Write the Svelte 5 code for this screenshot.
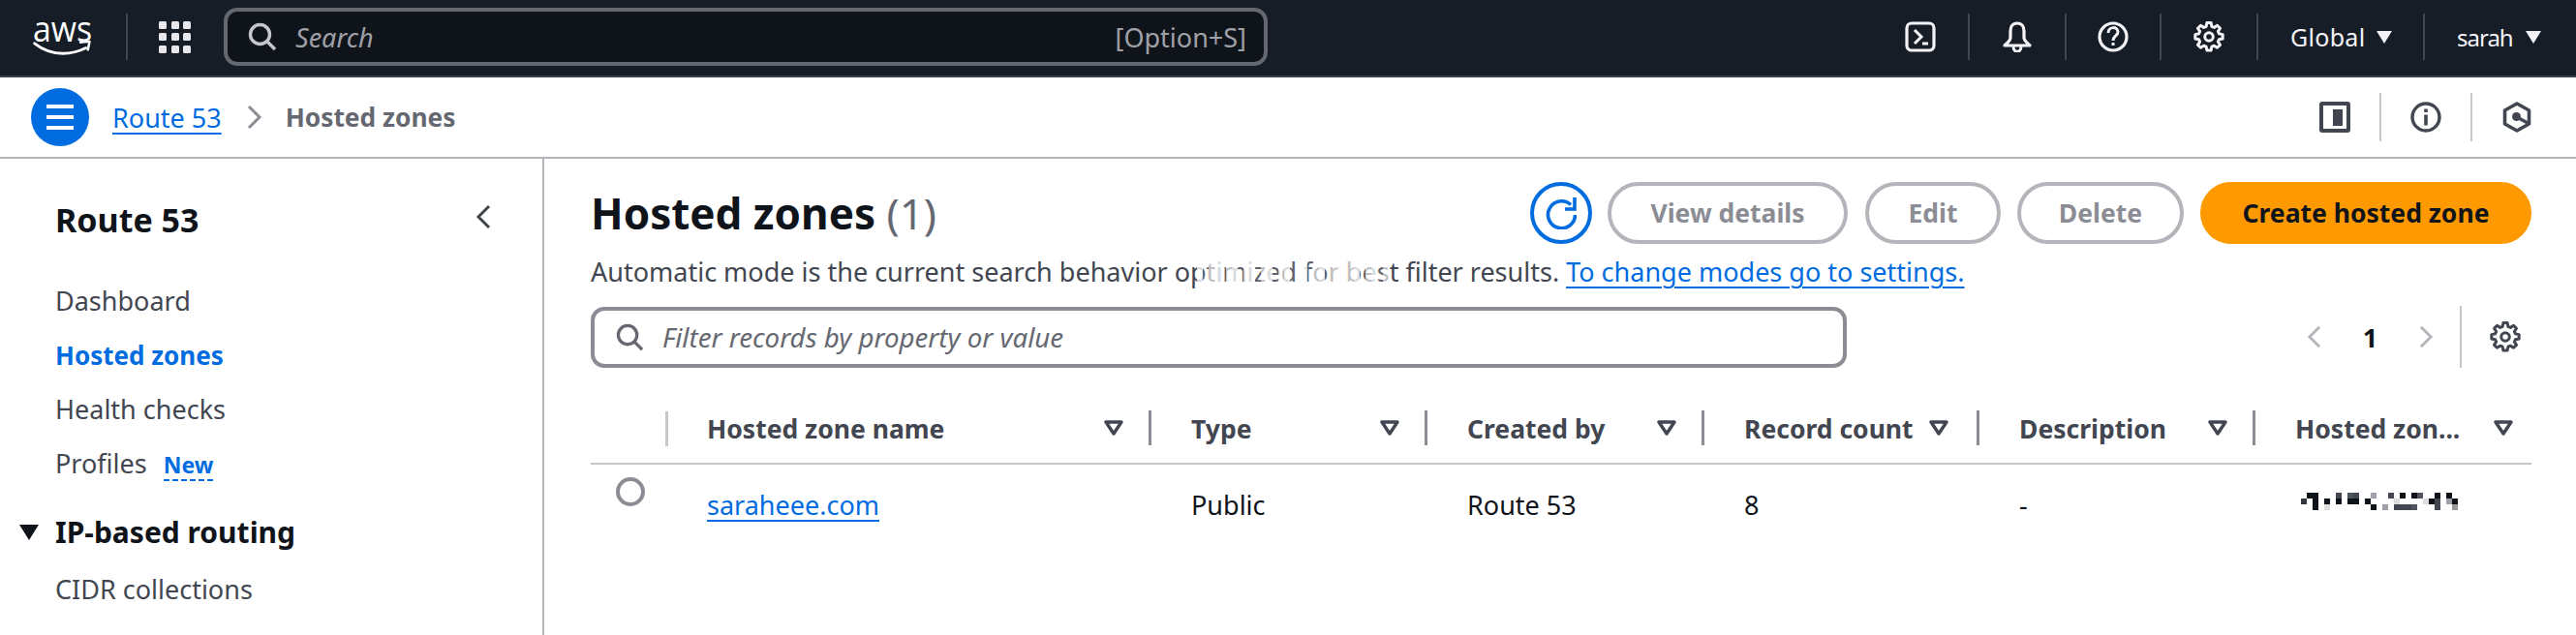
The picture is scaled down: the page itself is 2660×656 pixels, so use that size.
<script>
  const nav = [
    { label: 'Dashboard' },
    { label: 'Hosted zones', active: true },
    { label: 'Health checks' },
    { label: 'Profiles', badge: 'New' }
  ];
  const columns = [
    { label: 'Hosted zone name' },
    { label: 'Type' },
    { label: 'Created by' },
    { label: 'Record count' },
    { label: 'Description' },
    { label: 'Hosted zon...' }
  ];
  const gearPath = 'M13 1.500h4l.7 3.500 2.300 1 3-2 2.800 2.800-2 3 1 2.300 3.500.7v4l-3.500.7-1 2.300 2 3-2.800 2.800-3-2-2.300 1-.7 3.500h-4l-.7-3.500-2.300-1-3 2-2.800-2.800 2-3-1-2.300-3.500-.7v-4l3.500-.7 1-2.300-2-3L7 4l3 2 2.300-1z';
  // blurred id in the last column: [column, row, colour]
  const pixels = [
    [1, 0, '#0f141a'], [2, 0, '#0f141a'], [6, 0, '#424650'], [8, 0, '#50545c'], [9, 0, '#424650'], [12, 0, '#a0a0a8'], [15, 0, '#424650'], [17, 0, '#0f141a'], [19, 0, '#0f141a'], [20, 0, '#50545c'], [23, 0, '#0f141a'], [25, 0, '#0f141a'],
    [0, 1, '#333840'], [2, 1, '#0f141a'], [4, 1, '#0f141a'], [6, 1, '#0f141a'], [8, 1, '#0f141a'], [9, 1, '#0f141a'], [11, 1, '#0f141a'], [16, 1, '#dddde0'], [21, 1, '#dddde0'], [22, 1, '#0f141a'], [23, 1, '#424650'], [25, 1, '#a0a0a8'], [26, 1, '#0f141a'],
    [2, 2, '#0f141a'], [4, 2, '#dddde0'], [12, 2, '#0f141a'], [14, 2, '#a0a0a8'], [16, 2, '#424650'], [17, 2, '#424650'], [18, 2, '#424650'], [19, 2, '#50545c'], [23, 2, '#424650'], [26, 2, '#999']
  ];
</script>

<div class="page">
  <header class="topbar">
    <div class="logo">
      <span class="logo-text">aws</span>
      <svg viewBox="0 0 64 19" aria-hidden="true">
        <path d="M1 4c9 7 20 11 31 11 9 0 17-2 25-6" fill="none" stroke="#fff" stroke-width="3" stroke-linecap="round"/>
        <path d="M50 3l11-1-2 10" fill="none" stroke="#fff" stroke-width="2.600" stroke-linejoin="round"/>
      </svg>
    </div>
    <span class="bar-sep logo-sep"></span>
    <div class="apps">
      {#each Array(9) as _}<i></i>{/each}
    </div>
    <div class="search">
      <svg class="ic-search" viewBox="0 0 30 30" aria-hidden="true"><circle cx="12.500" cy="12.500" r="10" fill="none" stroke="currentColor" stroke-width="3.400"/><path d="M20 20l8 8" stroke="currentColor" stroke-width="3.400"/></svg>
      <span class="search-ph">Search</span>
      <span class="search-key">[Option+S]</span>
    </div>
    <div class="top-right">
      <span class="top-ic" style="--w:98px">
        <svg viewBox="0 0 32 32" aria-hidden="true"><rect x="2" y="2" width="28" height="28" rx="5" fill="none" stroke="currentColor" stroke-width="3.200"/><path d="M10 9l7 7-7 7" fill="none" stroke="currentColor" stroke-width="3"/><path d="M18 23h6" stroke="currentColor" stroke-width="3"/></svg>
      </span>
      <span class="bar-sep"></span>
      <span class="top-ic" style="--w:98px">
        <svg viewBox="0 0 32 32" aria-hidden="true"><path d="M16 2c-5 0-7 4-7 8v7c0 3-3 5-6 8h26c-3-3-6-5-6-8v-7c0-4-2-8-7-8z" fill="none" stroke="currentColor" stroke-width="3.200" stroke-linejoin="round"/><path d="M12 26c0 7 8 7 8 0" fill="none" stroke="currentColor" stroke-width="3"/></svg>
      </span>
      <span class="bar-sep"></span>
      <span class="top-ic" style="--w:96px">
        <svg viewBox="0 0 32 32" aria-hidden="true"><circle cx="16" cy="16" r="14" fill="none" stroke="currentColor" stroke-width="3.200"/><path d="M11 12c0-7 10-7 10-1 0 4-5 4-5 9" fill="none" stroke="currentColor" stroke-width="3"/><path d="M16 22v3" stroke="currentColor" stroke-width="3"/></svg>
      </span>
      <span class="bar-sep"></span>
      <span class="top-ic" style="--w:98px">
        <svg viewBox="0 0 30 30" aria-hidden="true"><path d={gearPath} fill="none" stroke="currentColor" stroke-width="2.800" stroke-linejoin="round"/><circle cx="15" cy="15" r="4" fill="none" stroke="currentColor" stroke-width="2.800"/></svg>
      </span>
      <span class="bar-sep"></span>
      <span class="menu region">Global <i class="caret"></i></span>
      <span class="bar-sep"></span>
      <span class="menu user">sarah <i class="caret"></i></span>
    </div>
  </header>

  <div class="crumbbar">
    <span class="burger"><i></i><i></i><i></i></span>
    <a class="link crumb" href="#top">Route 53</a>
    <svg class="crumb-chev" viewBox="0 0 16 26" aria-hidden="true"><path d="M2 2l11 11L2 24" fill="none" stroke="currentColor" stroke-width="3"/></svg>
    <span class="crumb-current">Hosted zones</span>
    <div class="tools">
      <svg viewBox="0 0 32 32" aria-hidden="true"><rect x="2" y="2" width="28" height="28" rx="1" fill="none" stroke="currentColor" stroke-width="4"/><rect x="14" y="8" width="10" height="17" fill="currentColor"/></svg>
      <span class="tool-sep"></span>
      <svg viewBox="0 0 32 32" aria-hidden="true"><circle cx="16" cy="16" r="14" fill="none" stroke="currentColor" stroke-width="3.400"/><path d="M16 13.500v11M16 7.500v3.500" stroke="currentColor" stroke-width="3.600"/></svg>
      <span class="tool-sep"></span>
      <svg viewBox="0 0 30 32" aria-hidden="true"><path d="M15 2l12.500 7v14L15 30 2.500 23V9z" fill="none" stroke="currentColor" stroke-width="3.600" stroke-linejoin="round"/><circle cx="14.500" cy="15.500" r="4.500" fill="currentColor"/><path d="M15 16l11 6" stroke="currentColor" stroke-width="3.400"/></svg>
    </div>
  </div>

  <div class="body">
    <aside class="side">
      <div class="side-head">
        <h2>Route 53</h2>
        <svg viewBox="0 0 16 26" aria-hidden="true"><path d="M14 2L3 13l11 11" fill="none" stroke="currentColor" stroke-width="3"/></svg>
      </div>
      <ul>
        {#each nav as item}
          <li class:active={item.active}>
            {item.label}
            {#if item.badge}<span class="badge">{item.badge}</span>{/if}
          </li>
        {/each}
      </ul>
      <div class="group"><i class="group-caret"></i>IP-based routing</div>
      <div class="group-item">CIDR collections</div>
    </aside>

    <main class="main">
      <div class="title-row">
        <h1>Hosted zones <span>(1)</span></h1>
        <div class="actions">
          <button class="refresh" aria-label="Refresh">
            <svg viewBox="0 0 32 34" aria-hidden="true"><path d="M26 8.500A14 14 0 1 0 30.500 19" fill="none" stroke="currentColor" stroke-width="3.600"/><path d="M30 1v12H20" fill="none" stroke="currentColor" stroke-width="3.600"/></svg>
          </button>
          <button class="btn view">View details</button>
          <button class="btn edit">Edit</button>
          <button class="btn del">Delete</button>
          <button class="btn primary">Create hosted zone</button>
        </div>
      </div>
      <p class="note">Automatic mode is the current search behavior <span class="blurred">optimized for best<i></i></span> filter results. <a class="link" href="#top">To change modes go to settings.</a></p>
      <div class="filter-row">
        <div class="filter">
          <svg viewBox="0 0 30 30" aria-hidden="true"><circle cx="12.500" cy="12.500" r="10" fill="none" stroke="currentColor" stroke-width="3.400"/><path d="M20 20l8 8" stroke="currentColor" stroke-width="3.400"/></svg>
          <span>Filter records by property or value</span>
        </div>
        <div class="pager">
          <svg class="pg-l" viewBox="0 0 16 26" aria-hidden="true"><path d="M14 2L3 13l11 11" fill="none" stroke="currentColor" stroke-width="3"/></svg>
          <b>1</b>
          <svg class="pg-r" viewBox="0 0 16 26" aria-hidden="true"><path d="M2 2l11 11L2 24" fill="none" stroke="currentColor" stroke-width="3"/></svg>
          <span class="pg-sep"></span>
          <svg class="pg-gear" viewBox="0 0 30 30" aria-hidden="true"><path d={gearPath} fill="none" stroke="currentColor" stroke-width="2.800" stroke-linejoin="round"/><circle cx="15" cy="15" r="4" fill="none" stroke="currentColor" stroke-width="2.800"/></svg>
        </div>
      </div>

      <div class="table">
        <div class="thead">
          <div class="cell-radio"><span class="th-sep"></span></div>
          {#each columns as col, i}
            <div class="th">
              <span>{col.label}</span>
              <svg viewBox="0 0 20 16" aria-hidden="true"><path d="M2 2h16l-8 12z" fill="none" stroke="currentColor" stroke-width="3.400" stroke-linejoin="round"/></svg>
              {#if i < columns.length - 1}<span class="th-sep dark"></span>{/if}
            </div>
          {/each}
        </div>
        <div class="tbody">
          <div class="cell-radio"><span class="radio"></span></div>
          <div class="td"><a class="link" href="#top">saraheee.com</a></div>
          <div class="td">Public</div>
          <div class="td">Route 53</div>
          <div class="td">8</div>
          <div class="td">-</div>
          <div class="td">
            <span class="pixelated">
              {#each pixels as p}
                <i style="left:{p[0] * 6}px;top:{p[1] * 6}px;background:{p[2]}"></i>
              {/each}
            </span>
          </div>
        </div>
      </div>
    </main>
  </div>
</div>

<style>
  :global(body) {
    margin: 0;
    background: #fff;
  }

  .page {
    width: 2660px;
    height: 656px;
    overflow: hidden;
    font-family: 'Noto Sans', sans-serif;
    font-size: 27px;
    color: #424650;
  }

  .link {
    color: #006ce0;
    text-decoration: underline;
    text-decoration-thickness: 2px;
    text-underline-offset: 5px;
  }

  /* top navigation */
  .topbar {
    height: 76px;
    padding-bottom: 2px;
    border-bottom: 2px solid #3a414c;
    background: #161d26;
    color: #f3f3f7;
    display: flex;
    align-items: center;
    padding-left: 33px;
    padding-right: 34px;
  }

  .logo {
    width: 64px;
    height: 42px;
    flex: none;
    display: flex;
    flex-direction: column;
    align-items: center;
  }

  .logo-text {
    font-family: 'Open Sans', sans-serif;
    font-size: 36px;
    line-height: 26px;
    color: #fff;
    transform: scaleX(0.94);
  }

  .logo svg {
    width: 64px;
    height: 19px;
    margin-top: -2px;
  }

  .bar-sep {
    width: 2px;
    height: 48px;
    background: #424650;
    flex: none;
  }

  .logo-sep {
    margin-left: 33px;
  }

  .apps {
    margin-left: 32px;
    width: 33px;
    display: grid;
    grid-template-columns: repeat(3, 8px);
    gap: 4.500px;
    flex: none;
  }

  .apps i {
    height: 8px;
    background: #e8e8ec;
    border-radius: 1.500px;
  }

  .search {
    margin-left: 34px;
    width: 1078px;
    height: 60px;
    box-sizing: border-box;
    border: 4px solid #656871;
    border-radius: 14px;
    background: #0f141a;
    display: flex;
    align-items: center;
    color: #b4b4bb;
    padding: 0 18px 0 21px;
    flex: none;
  }

  .ic-search {
    width: 30px;
    height: 30px;
    color: #c6c6cd;
  }

  .search-ph {
    font-style: italic;
    margin-left: 19px;
    color: #a0a0a8;
  }

  .search-key {
    margin-left: auto;
    color: #a0a0a8;
  }

  .top-right {
    margin-left: auto;
    display: flex;
    align-items: center;
  }

  .top-ic {
    width: var(--w);
    display: flex;
    justify-content: center;
  }

  .top-ic svg {
    width: 32px;
    height: 32px;
  }

  .menu {
    display: flex;
    align-items: center;
    font-size: 25px;
    color: #f3f3f7;
  }

  .region {
    width: 170px;
    padding-left: 33px;
    box-sizing: border-box;
    gap: 12px;
    letter-spacing: 0.3px;
  }

  .user {
    width: 122px;
    padding-left: 33px;
    box-sizing: border-box;
    gap: 13px;
    font-size: 24px;
    letter-spacing: -1px;
  }

  .caret {
    width: 0;
    height: 0;
    border-left: 8px solid transparent;
    border-right: 8px solid transparent;
    border-top: 13px solid #f3f3f7;
  }

  /* breadcrumbs */
  .crumbbar {
    height: 82px;
    border-bottom: 2px solid #b4b4bb;
    display: flex;
    align-items: center;
    padding-left: 32px;
  }

  .burger {
    width: 60px;
    height: 60px;
    border-radius: 50%;
    background: #006ce0;
    display: flex;
    flex-direction: column;
    align-items: center;
    justify-content: center;
    gap: 7px;
    flex: none;
  }

  .burger i {
    width: 28px;
    height: 4px;
    background: #fff;
  }

  .crumb {
    margin-left: 24px;
  }

  .crumb-chev {
    width: 16px;
    height: 26px;
    margin-left: 26px;
    color: #8c8c94;
  }

  .crumb-current {
    margin-left: 24px;
    font-size: 26.300px;
    font-weight: 700;
    color: #656871;
  }

  .tools {
    margin-left: auto;
    display: flex;
    align-items: center;
    color: #424650;
    padding-right: 45px;
  }

  .tools svg {
    width: 32px;
    height: 32px;
  }

  .tool-sep {
    width: 2px;
    height: 50px;
    background: #c6c6cd;
    margin: 0 30px;
  }

  /* layout */
  .body {
    display: flex;
    height: 492px;
  }

  .side {
    width: 562px;
    flex: none;
    box-sizing: border-box;
    border-right: 2px solid #b4b4bb;
    padding-left: 57px;
    padding-right: 53px;
  }

  .side-head {
    display: flex;
    align-items: center;
    justify-content: space-between;
    height: 40px;
    margin-top: 43px;
    color: #424650;
  }

  .side-head h2 {
    margin: 0;
    font-size: 34px;
    line-height: 40px;
    font-weight: 700;
    color: #0f141a;
  }

  .side-head svg {
    width: 16px;
    height: 26px;
    margin-top: -6px;
  }

  .side ul {
    list-style: none;
    margin: 36px 0 0;
    padding: 0;
  }

  .side li {
    height: 56px;
    line-height: 56px;
  }

  .side li.active {
    color: #006ce0;
    font-size: 26px;
    font-weight: 700;
  }

  .badge {
    display: inline-block;
    line-height: 30px;
    margin-left: 10px;
    font-size: 23px;
    font-weight: 700;
    color: #006ce0;
    border-bottom: 2px dashed #006ce0;
  }

  .group {
    position: relative;
    margin-top: 22px;
    font-size: 30px;
    font-weight: 700;
    line-height: 42px;
    color: #0f141a;
  }

  .group-caret {
    position: absolute;
    left: -37px;
    top: 13px;
    border-left: 10px solid transparent;
    border-right: 10px solid transparent;
    border-top: 16px solid #0f141a;
  }

  .group-item {
    margin-top: 10px;
    line-height: 56px;
  }

  .main {
    flex: 1;
    padding: 24px 46px 0 48px;
    min-width: 0;
  }

  .title-row {
    display: flex;
    align-items: center;
    justify-content: space-between;
    height: 64px;
  }

  h1 {
    margin: 0;
    font-size: 44px;
    font-weight: 700;
    color: #0f141a;
    white-space: nowrap;
  }

  h1 span {
    font-weight: 400;
    color: #656871;
  }

  .actions {
    display: flex;
    align-items: center;
  }

  .refresh {
    width: 64px;
    height: 64px;
    box-sizing: border-box;
    border: 4px solid #006ce0;
    border-radius: 50%;
    background: #fff;
    color: #006ce0;
    padding: 0;
    display: flex;
    align-items: center;
    justify-content: center;
  }

  .refresh svg {
    width: 32px;
    height: 34px;
  }

  .btn {
    height: 64px;
    box-sizing: border-box;
    border: 4px solid #b4b4bb;
    border-radius: 32px;
    background: #fff;
    color: #8c8c94;
    font: 700 26.500px 'Noto Sans', sans-serif;
    padding: 0;
    white-space: nowrap;
  }

  .view { width: 248px; margin-left: 16px; }
  .edit { width: 140px; margin-left: 18px; }
  .del { width: 172px; margin-left: 17px; }

  .primary {
    width: 342px;
    margin-left: 17px;
    background: #ff9900;
    border-color: #ff9900;
    color: #0f141a;
  }

  .note {
    margin: 7px 0 0;
    height: 46px;
    line-height: 44px;
    white-space: nowrap;
  }

  .blurred {
    position: relative;
  }

  /* the source has this part of the sentence pixelated */
  .blurred i {
    position: absolute;
    left: 23px;
    width: 198px;
    top: 2px;
    bottom: 0;
    background: repeating-linear-gradient(90deg, rgba(255, 255, 255, 0.8) 0 6px, rgba(255, 255, 255, 0.15) 6px 12px, rgba(255, 255, 255, 0.65) 12px 18px);
  }

  .filter-row {
    margin-top: 11px;
    height: 64px;
    display: flex;
    align-items: center;
  }

  .filter {
    width: 1297px;
    height: 63px;
    box-sizing: border-box;
    border: 4px solid #8c8c94;
    border-radius: 14px;
    display: flex;
    align-items: center;
    padding-left: 22px;
    color: #656871;
  }

  .filter svg {
    width: 29px;
    height: 29px;
  }

  .filter span {
    margin-left: 19px;
    font-size: 27.700px;
    font-style: italic;
  }

  .pager {
    margin-left: auto;
    display: flex;
    align-items: center;
    height: 64px;
    color: #b4b4bb;
  }

  .pager svg.pg-l,
  .pager svg.pg-r {
    width: 15px;
    height: 26px;
  }

  .pager b {
    width: 101px;
    text-align: center;
    color: #0f141a;
    font-weight: 700;
  }

  .pg-sep {
    width: 2px;
    height: 64px;
    background: #c6c6cd;
    margin-left: 27px;
  }

  .pg-gear {
    width: 32px;
    height: 32px;
    margin-left: 29px;
    margin-right: 11px;
    color: #424650;
  }

  .table {
    margin-top: 44px;
  }

  .thead,
  .tbody {
    display: grid;
    grid-template-columns: 120px 500px 285px 286px 284px 285px 1fr;
  }

  .thead {
    height: 36px;
    padding-bottom: 18px;
    border-bottom: 2px solid #c6c6cd;
    align-items: center;
  }

  .cell-radio {
    position: relative;
    height: 36px;
    padding-left: 26px;
  }

  .th-sep {
    position: absolute;
    left: 77px;
    top: 0;
    width: 3px;
    height: 36px;
    background: #c6c6cd;
  }

  .th {
    position: relative;
    display: flex;
    align-items: center;
    font-size: 26.500px;
    font-weight: 700;
    height: 36px;
    margin-top: 1px;
    white-space: nowrap;
  }

  .th svg {
    position: absolute;
    width: 20px;
    height: 16px;
    top: 9px;
    right: 70px;
  }

  .th:last-child svg {
    right: 19px;
  }

  .th:nth-child(5) svg {
    right: 73px;
  }

  .th-sep.dark {
    left: auto;
    right: 41px;
    top: -1px;
    background: #8c8c94;
  }

  .tbody {
    height: 88px;
    align-items: start;
  }

  .radio {
    display: block;
    width: 30px;
    height: 30px;
    box-sizing: border-box;
    border: 4px solid #8c8c94;
    border-radius: 50%;
    margin-top: 13px;
  }

  .td {
    color: #0f141a;
    line-height: 38px;
    margin-top: 23px;
  }

  .pixelated {
    position: relative;
    display: block;
    height: 18px;
    margin-left: 6px;
    margin-top: 6px;
  }

  .pixelated i {
    position: absolute;
    width: 6px;
    height: 6px;
  }
</style>
